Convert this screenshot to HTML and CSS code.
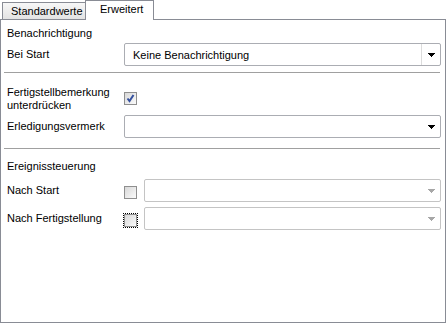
FILE: index.html
```html
<!DOCTYPE html>
<html lang="de">
<head>
    <meta charset="UTF-8">
    <title>Erweitert</title>
    <link rel="stylesheet" href="styles.css">
</head>
<body>
    <div class="tabs">
        <div class="tab">Standardwerte</div>
        <div class="tab active">Erweitert</div>
    </div>

    <div class="panel">
        <!-- Benachrichtigung -->
        <div class="section first">
            <div class="heading">Benachrichtigung</div>
            <div class="row combo-row">
                <div class="label">Bei Start</div>
                <div class="combo split">
                    <span class="combo-text">Keine Benachrichtigung</span>
                    <span class="combo-btn">
                        <svg width="7" height="4" viewBox="0 0 7 4" shape-rendering="crispEdges"><path d="M0 0h7v1h-1v1h-1v1h-1v1h-1v-1h-1v-1h-1v-1h-1z" fill="#000"/></svg>
                    </span>
                </div>
            </div>
        </div>
        <div class="divider"></div>

        <div class="section">
            <div class="row check-row">
                <div class="label">Fertigstellbemerkung<br>unterdrücken</div>
                <div class="check checked">
                    <svg width="9" height="9" viewBox="0 0 9 9"><path d="M1.5 4.5 L3.5 7 L7.5 1" fill="none" stroke="#34509e" stroke-width="2"/></svg>
                </div>
            </div>
            <div class="row combo-row second">
                <div class="label">Erledigungsvermerk</div>
                <div class="combo">
                    <span class="combo-text"></span>
                    <span class="combo-btn">
                        <svg width="7" height="4" viewBox="0 0 7 4" shape-rendering="crispEdges"><path d="M0 0h7v1h-1v1h-1v1h-1v1h-1v-1h-1v-1h-1v-1h-1z" fill="#000"/></svg>
                    </span>
                </div>
            </div>
        </div>
        <div class="divider lower"></div>

        <!-- Ereignissteuerung -->
        <div class="section events">
            <div class="heading">Ereignissteuerung</div>
            <div class="row combo-row event">
                <div class="label">Nach Start</div>
                <div class="check"></div>
                <div class="combo disabled">
                    <span class="combo-text"></span>
                    <span class="combo-btn">
                        <svg width="7" height="4" viewBox="0 0 7 4" shape-rendering="crispEdges"><path d="M0 0h7v1h-1v1h-1v1h-1v1h-1v-1h-1v-1h-1v-1h-1z" fill="#a7a7a7"/></svg>
                    </span>
                </div>
            </div>
            <div class="row combo-row event next">
                <div class="label">Nach Fertigstellung</div>
                <div class="check focused"></div>
                <div class="combo disabled">
                    <span class="combo-text"></span>
                    <span class="combo-btn">
                        <svg width="7" height="4" viewBox="0 0 7 4" shape-rendering="crispEdges"><path d="M0 0h7v1h-1v1h-1v1h-1v1h-1v-1h-1v-1h-1v-1h-1z" fill="#a7a7a7"/></svg>
                    </span>
                </div>
            </div>
        </div>
    </div>
</body>
</html>
```

FILE: styles.css
```css
* {
    margin: 0;
    padding: 0;
    box-sizing: border-box;
}

body {
    font-family: "Liberation Sans", Arial, sans-serif;
    font-size: 11px;
    color: #000;
    background: #fff;
    width: 446px;
    height: 323px;
    overflow: hidden;
}

/* Reiter */
.tabs {
    display: flex;
    align-items: flex-end;
    height: 19px;
    padding-left: 2px;
    position: relative;
    z-index: 1;
}

.tab {
    height: 17px;
    width: 84px;
    border: 1px solid #898c95;
    border-bottom: none;
    background: linear-gradient(#f7f7f7, #e3e3e3);
    padding-left: 8px;
    line-height: 16px;
    white-space: nowrap;
}

.tab.active {
    height: 20px;
    width: 69px;
    margin-left: -1px;
    margin-bottom: -1px;
    background: #fff;
    padding-left: 14px;
    line-height: 16px;
}

.panel {
    border: 1px solid #898c95;
    height: 304px;
    padding: 0 4px 0 6px;
}

.section.first {
    padding-top: 7px;
}

.heading {
    height: 13px;
    line-height: 13px;
}

.row {
    display: flex;
    align-items: center;
}

.label {
    width: 117px;
    flex: none;
    line-height: 13px;
}

.combo-row {
    margin-top: 3px;
    height: 23px;
}

.combo {
    flex: 1;
    height: 23px;
    border: 1px solid #abadb3;
    border-radius: 2px;
    display: flex;
    align-items: center;
    background: #fff;
}

.combo-text {
    flex: 1;
    padding-left: 8px;
}

.combo-btn {
    width: 19px;
    height: 21px;
    display: flex;
    align-items: center;
    justify-content: center;
    padding-left: 1px;
}

.combo.split .combo-btn {
    border-left: 1px solid #dcdcdc;
}

.combo.disabled {
    border-color: #c4c4c4;
}

.divider {
    height: 1px;
    background: #a0a0a0;
    margin: 6px 1px 0 -3px;
}

.divider.lower {
    margin-top: 10px;
}

.check-row {
    margin-top: 13px;
    align-items: flex-start;
}

.check {
    width: 13px;
    height: 13px;
    flex: none;
    border: 1px solid #8f8f8f;
    background: linear-gradient(135deg, #d8d8d8, #fbfbfb);
    display: flex;
    align-items: center;
    justify-content: center;
}

.check-row .check {
    margin-top: 6px;
}

.combo-row.second {
    margin-top: 3px;
}

.events {
    padding-top: 11px;
}

.event {
    margin-top: 6px;
}

.event.next {
    margin-top: 5px;
}

.event .check {
    margin-right: 7px;
    margin-top: 4px;
}

.check.focused {
    outline: 1px dotted #000;
}
```
